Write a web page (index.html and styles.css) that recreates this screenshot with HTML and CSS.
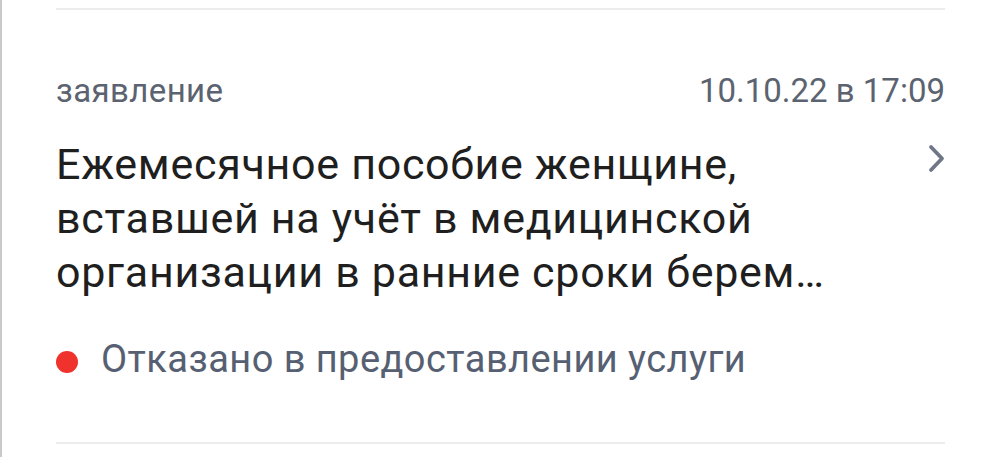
FILE: index.html
```html
<!DOCTYPE html>
<html lang="ru">
<head>
<meta charset="utf-8">
<link rel="stylesheet" href="styles.css">
</head>
<body>
<div class="page">
  <div class="card">
    <div class="divider"></div>
    <div class="meta">
      <span class="kind">заявление</span>
      <span class="date">10.10.22 в 17:09</span>
    </div>
    <div class="main">
      <div class="title">Ежемесячное пособие женщине, вставшей на учёт в медицинской организации в ранние сроки берем…</div>
      <svg class="chevron" width="18" height="30" viewBox="0 0 18 30"><path d="M3 3 L14 14.5 L3 26" fill="none" stroke="#6f7787" stroke-width="3.8" stroke-linecap="round" stroke-linejoin="round"/></svg>
    </div>
    <div class="status">
      <span class="dot"></span>
      <span class="status-text">Отказано в предоставлении услуги</span>
    </div>
    <div class="divider bottom"></div>
  </div>
</div>
</body>
</html>
```
FILE: styles.css
```css
html, body {
  margin: 0;
  padding: 0;
  background: #ffffff;
}
body {
  font-family: Roboto, "Noto Sans", sans-serif;
  height: 457px;
  overflow: hidden;
}
.page {
  height: 457px;
  border-left: 2px solid #c9c9c9;
  box-sizing: border-box;
}
.card {
  padding: 8px 55px 0 54px;
}
.divider {
  height: 2px;
  background: #ececec;
}
.meta {
  display: flex;
  justify-content: space-between;
  align-items: baseline;
  margin-top: 61px;
  font-size: 33px;
  line-height: 40px;
  color: #5c6370;
}
.kind {
  letter-spacing: 0.4px;
}
.date {
  letter-spacing: 0;
}
.main {
  display: flex;
  justify-content: space-between;
  align-items: flex-start;
  margin-top: 26px;
}
.title {
  flex: 0 0 800px;
  font-size: 43px;
  line-height: 54px;
  letter-spacing: 0.7px;
  color: #1f1f1f;
}
.chevron {
  margin-top: 7px;
  margin-right: -1px;
}
.status {
  display: flex;
  align-items: flex-start;
  margin-top: 38px;
}
.dot {
  flex: none;
  width: 22px;
  height: 22px;
  border-radius: 50%;
  background: #f0322c;
  margin-top: 14px;
  margin-right: 23px;
}
.status-text {
  font-size: 38px;
  line-height: 44px;
  letter-spacing: 0.45px;
  color: #566072;
}
.divider.bottom {
  margin-top: 61px;
}
```
